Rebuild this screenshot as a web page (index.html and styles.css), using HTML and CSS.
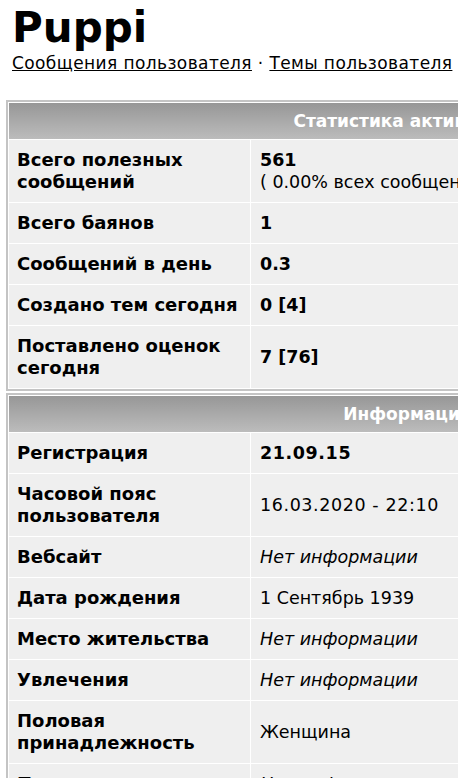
FILE: index.html
```html
<!DOCTYPE html>
<html lang="ru">
<head>
<meta charset="utf-8">
<title>Puppi</title>
<link rel="stylesheet" href="styles.css">
</head>
<body>
<div class="page">
  <h1 class="name">Puppi</h1>
  <div class="links"><a href="#">Сообщения пользователя</a> · <a href="#">Темы пользователя</a></div>

  <div class="box">
    <table class="grid">
      <tr><th colspan="2">Статистика активности</th></tr>
      <tr><td class="lbl">Всего полезных сообщений</td><td class="val"><b>561</b><br>( 0.00% всех сообщений )</td></tr>
      <tr><td class="lbl">Всего баянов</td><td class="val"><b>1</b></td></tr>
      <tr><td class="lbl">Сообщений в день</td><td class="val"><b>0.3</b></td></tr>
      <tr><td class="lbl">Создано тем сегодня</td><td class="val"><b>0 [4]</b></td></tr>
      <tr><td class="lbl">Поставлено оценок сегодня</td><td class="val"><b>7 [76]</b></td></tr>
    </table>
  </div>

  <div class="box">
    <table class="grid">
      <tr><th colspan="2">Информация</th></tr>
      <tr><td class="lbl">Регистрация</td><td class="val"><b class="num">21.09.15</b></td></tr>
      <tr><td class="lbl">Часовой пояс пользователя</td><td class="val"><span class="num">16.03.2020 - 22:10</span></td></tr>
      <tr><td class="lbl">Вебсайт</td><td class="val"><i>Нет информации</i></td></tr>
      <tr><td class="lbl">Дата рождения</td><td class="val">1 Сентябрь 1939</td></tr>
      <tr><td class="lbl">Место жительства</td><td class="val"><i>Нет информации</i></td></tr>
      <tr><td class="lbl">Увлечения</td><td class="val"><i>Нет информации</i></td></tr>
      <tr><td class="lbl">Половая принадлежность</td><td class="val">Женщина</td></tr>
      <tr><td class="lbl">Подпись</td><td class="val"><i>Нет информации</i></td></tr>
    </table>
  </div>
</div>
</body>
</html>
```

FILE: styles.css
```css
html, body {
  margin: 0;
  padding: 0;
  background: #ffffff;
  overflow: hidden;
}
.page {
  width: 820px;
  padding: 0 0 20px 0;
  font-family: "DejaVu Sans", Verdana, sans-serif;
  color: #000;
}
.name {
  margin: 0;
  padding: 6px 0 0 12px;
  font-size: 42px;
  line-height: 44px;
  font-weight: bold;
}
.links {
  padding-left: 12px;
  padding-top: 2px;
  font-size: 17px;
  letter-spacing: 0.4px;
  line-height: 22px;
  margin-bottom: 26px;
}
.links a {
  color: #000;
  text-decoration: underline;
}
.box {
  margin-left: 6px;
  width: 798px;
  border: 2px solid #c4c4c4;
  background: #fff;
  margin-bottom: 2px;
}
.grid {
  width: 100%;
  border-collapse: separate;
  border-spacing: 1px;
  background: #fff;
  line-height: 22px;
}
.grid th {
  height: 36px;
  padding: 0;
  color: #fff;
  font-weight: bold;
  font-size: 17px;
  text-align: center;
  background: linear-gradient(to bottom, #979797, #bcbcbc);
}
.grid td {
  background: #efefef;
  padding: 9px 8px;
  vertical-align: middle;
}
.grid td.lbl {
  width: 225px;
  font-weight: bold;
  font-size: 18px;
}
.grid td.val {
  padding-left: 9px;
  font-size: 17.5px;
}
.num {
  letter-spacing: 0.6px;
}
```
